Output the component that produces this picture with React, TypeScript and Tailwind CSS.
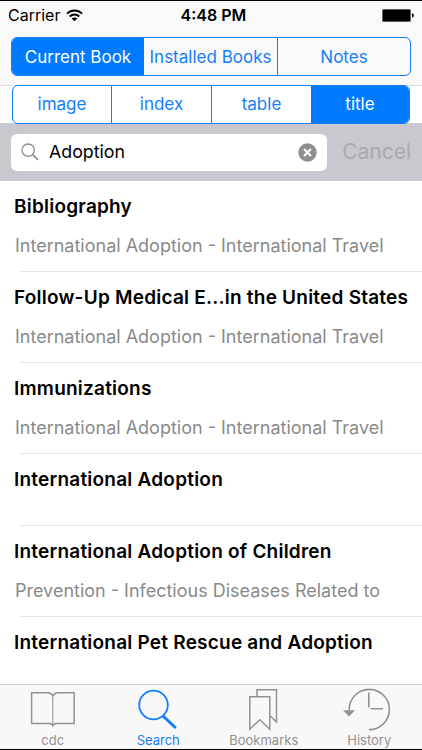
import React from "react";

type Entry = { title: string; detail?: string };

const entries: Entry[] = [
  { title: "Bibliography", detail: "International Adoption - International Travel" },
  { title: "Follow-Up Medical E...in the United States", detail: "International Adoption - International Travel" },
  { title: "Immunizations", detail: "International Adoption - International Travel" },
  { title: "International Adoption" },
  { title: "International Adoption of Children", detail: "Prevention - Infectious Diseases Related to" },
  { title: "International Pet Rescue and Adoption" },
];

function StatusBar() {
  return (
    <div className="grid h-[28px] grid-cols-3 items-center pl-[8px] pr-[8px] text-[16px] leading-[28px] text-black">
      <div className="flex items-center gap-[6px]">
        <span>Carrier</span>
        <svg width="17" height="13" viewBox="0 0 17 13" fill="none" stroke="#000" strokeWidth="2">
          <path d="M1 4.6C5.2.5 11.8.5 16 4.6M3.7 7.5c2.7-2.6 6.9-2.6 9.6 0" />
          <path d="M8.5 12.3 5.7 9.5c1.6-1.5 4-1.5 5.6 0Z" fill="#000" stroke="none" />
        </svg>
      </div>
      <span className="pl-[5px] text-center font-semibold">4:48 PM</span>
      <div className="flex justify-end">
        <svg width="32" height="13" viewBox="0 0 32 13">
          <rect x="0" y="0" width="29" height="13" rx="1.5" fill="#777" />
          <rect x="0.8" y="0.8" width="27.4" height="11.4" rx="1" fill="#000" />
          <path d="M30 4.3c2.4.6 2.4 3.8 0 4.4Z" fill="#000" />
        </svg>
      </div>
    </div>
  );
}

function ScopeBar() {
  return (
    <div className="mx-[11px] mt-[8px] flex h-[39px] overflow-hidden rounded-[6px] border-[1.5px] border-[#147efb] text-[17px] leading-[38px] text-[#147efb]">
      <div className="w-[132px] bg-[#007aff] text-center text-white">Current Book</div>
      <div className="w-[134px] border-r border-[#147efb] text-center">Installed Books</div>
      <div className="flex-1 text-center">Notes</div>
    </div>
  );
}

function KindBar() {
  return (
    <div className="ml-[12px] mr-[12px] flex h-[39px] overflow-hidden rounded-[6px] border-[1.5px] border-[#147efb] bg-white text-[17px] leading-[37px] text-[#147efb]">
      <div className="w-[99px] border-r border-[#147efb] text-center">image</div>
      <div className="w-[100px] border-r border-[#147efb] text-center">index</div>
      <div className="w-[99px] text-center">table</div>
      <div className="flex-1 bg-[#007aff] text-center text-white">title</div>
    </div>
  );
}

function SearchBar() {
  return (
    <div className="flex h-[58px] items-center bg-[#c9c8ce] pl-[11px] pr-[11px]">
      <div className="flex h-[37px] w-[316px] items-center rounded-[6px] bg-white pl-[10px] pr-[10px]">
        <svg width="18" height="18" viewBox="0 0 18 18" fill="none" stroke="#8e8e93">
          <circle cx="7.2" cy="7.2" r="6.2" strokeWidth="1.3" />
          <path d="m11.8 11.8 5.2 5" strokeWidth="1.8" />
        </svg>
        <span className="ml-[10px] flex-1 text-[17.8px] text-black">Adoption</span>
        <svg width="19" height="19" viewBox="0 0 19 19">
          <circle cx="9.5" cy="9.5" r="9.2" fill="#8e8e93" />
          <path d="m6 6 7 7m0-7-7 7" stroke="#fff" strokeWidth="2" />
        </svg>
      </div>
      <span className="flex-1 text-right text-[21px] text-[#aaaaaf]">Cancel</span>
    </div>
  );
}

function Row({ entry }: { entry: Entry }) {
  return (
    <li className={entry.detail ? "flex h-[91px] flex-col pl-[14px]" : "flex h-[72px] flex-col pl-[14px]"}>
      <div className="mt-[12px] h-[28px] whitespace-nowrap text-[19px] font-semibold leading-[28px] tracking-[0.22px] text-black">
        {entry.title}
      </div>
      <div className="ml-[1px] mt-[12px] flex-1 whitespace-nowrap text-[18px] leading-[26px] text-[#8a8a8a]">{entry.detail}</div>
      <div className="ml-[6px] h-px shrink-0 bg-[#e4e4e5]" />
    </li>
  );
}

function Tab({ label, active, children }: { label: string; active?: boolean; children: React.ReactNode }) {
  return (
    <div className={active ? "flex flex-1 flex-col items-center text-[#147efb]" : "flex flex-1 flex-col items-center text-[#929292]"}>
      <svg width="60" height="48" viewBox="0 0 60 48" fill="none" stroke="currentColor" strokeWidth="1.5">
        {children}
      </svg>
      <span className="text-[13px] leading-[15px]">{label}</span>
    </div>
  );
}

export default function App() {
  return (
    <main className="flex h-[750px] w-[422px] flex-col overflow-hidden border-y border-black bg-white font-[Inter,sans-serif]">
      <header className="h-[84px] shrink-0 bg-[#f9f9f9]">
        <StatusBar />
        <ScopeBar />
      </header>
      <section className="relative z-10 h-[38px] shrink-0 shadow-[inset_0_1px_0_#dedede]">
        <KindBar />
      </section>
      <SearchBar />
      <ul className="min-h-0 flex-1 overflow-hidden">
        {entries.map((entry) => (
          <Row key={entry.title} entry={entry} />
        ))}
      </ul>
      <nav className="flex h-[65px] shrink-0 border-t border-[#cfcfcf] bg-[#f8f8f8]">
        <Tab label="cdc">
          <path d="M29.8 10.8c-1-1.8-2.6-3-5-3H8.6v30.8h17.8c1.6 0 2.8.7 3.4 2 .6-1.3 1.8-2 3.4-2h18V7.8H34.8c-2.4 0-4 1.2-5 3Z" />
          <path d="M29.8 11v29" strokeWidth="1" />
        </Tab>
        <Tab label="Search" active>
          <circle cx="25.5" cy="20" r="14.3" strokeWidth="1.8" />
          <path d="m35 31 12.8 12" strokeWidth="3" />
        </Tab>
        <Tab label="Bookmarks">
          <path d="M23 11V4.7h19.5V37l-6.2-6" />
          <path d="M15.8 11.7h20v32.5l-10-9.5-10 9.5Z" />
        </Tab>
        <Tab label="History">
          <path d="M10.2 25A20.1 20.1 0 1 1 30 44.6M29.8 7.5V22.5M31.5 23.8H44" strokeWidth="1.6" />
          <path d="M4 25.2h12l-6 6.2Z" fill="currentColor" stroke="none" />
        </Tab>
      </nav>
    </main>
  );
}
